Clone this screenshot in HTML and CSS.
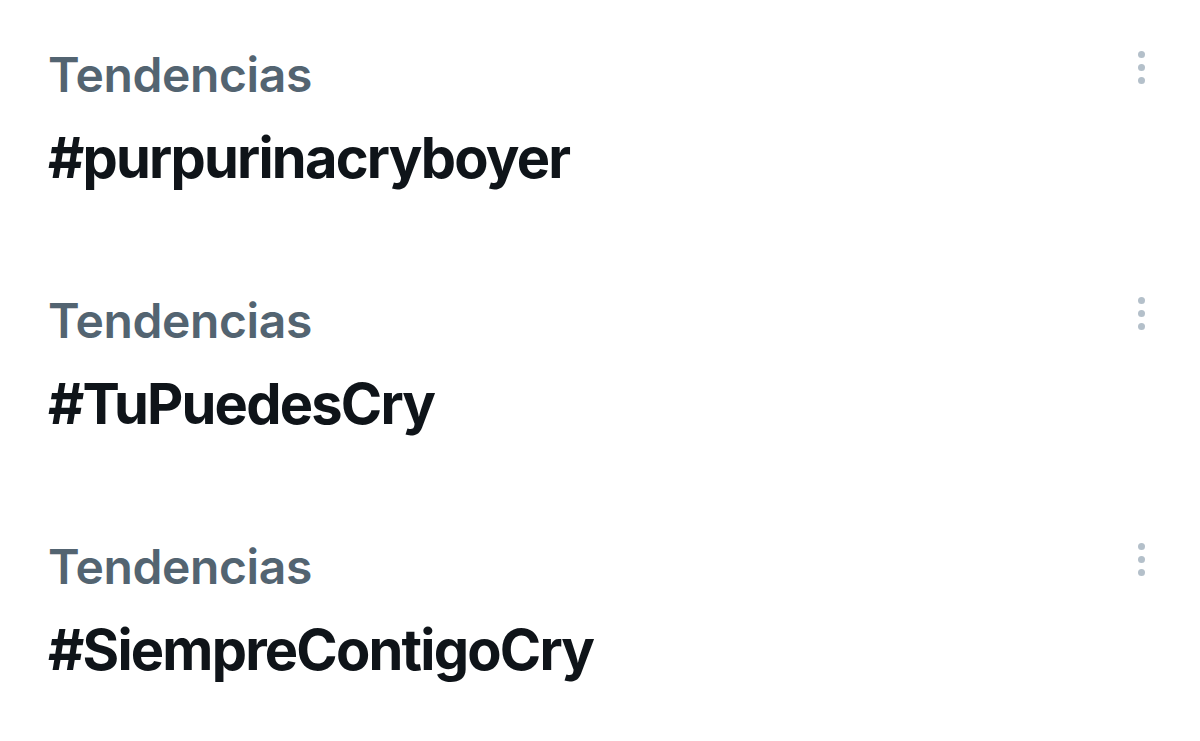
FILE: index.html
```html
<!DOCTYPE html>
<html lang="es">
<head>
<meta charset="utf-8">
<title>Tendencias</title>
<link rel="stylesheet" href="styles.css">
</head>
<body>
<main class="trends">
  <section class="trend">
    <div class="trend-text">
      <div class="trend-label">Tendencias</div>
      <div class="trend-title">#purpurinacryboyer</div>
    </div>
    <button class="more" aria-label="Más opciones"><span class="dot"></span><span class="dot"></span><span class="dot"></span></button>
  </section>
  <section class="trend">
    <div class="trend-text">
      <div class="trend-label">Tendencias</div>
      <div class="trend-title">#TuPuedesCry</div>
    </div>
    <button class="more" aria-label="Más opciones"><span class="dot"></span><span class="dot"></span><span class="dot"></span></button>
  </section>
  <section class="trend">
    <div class="trend-text">
      <div class="trend-label">Tendencias</div>
      <div class="trend-title">#SiempreContigoCry</div>
    </div>
    <button class="more" aria-label="Más opciones"><span class="dot"></span><span class="dot"></span><span class="dot"></span></button>
  </section>
</main>
</body>
</html>
```
FILE: styles.css
```css
html, body {
  margin: 0;
  padding: 0;
  background: #ffffff;
}
body {
  font-family: Inter, "Noto Sans", "Liberation Sans", sans-serif;
  width: 1200px;
  height: 741px;
  overflow: hidden;
}
.trends {
  display: flex;
  flex-direction: column;
  gap: 100px;
  padding: 46px 0 0 48px;
}
.trend {
  display: flex;
  justify-content: space-between;
  align-items: flex-start;
}
.trend-text {
  display: flex;
  flex-direction: column;
}
.trend-label {
  color: #536471;
  font-size: 48px;
  font-weight: 600;
  line-height: 58px;
  letter-spacing: -0.4px;
}
.trend-title {
  color: #0f1419;
  font-size: 56px;
  font-weight: 700;
  line-height: 68px;
  letter-spacing: -1.8px;
  margin-top: 20px;
}
.more {
  display: flex;
  flex-direction: column;
  gap: 6px;
  border: 0;
  background: none;
  padding: 0;
  margin: 5px 55px 0 0;
}
.dot {
  width: 7px;
  height: 7px;
  border-radius: 50%;
  background: #b4c0ca;
}
```
